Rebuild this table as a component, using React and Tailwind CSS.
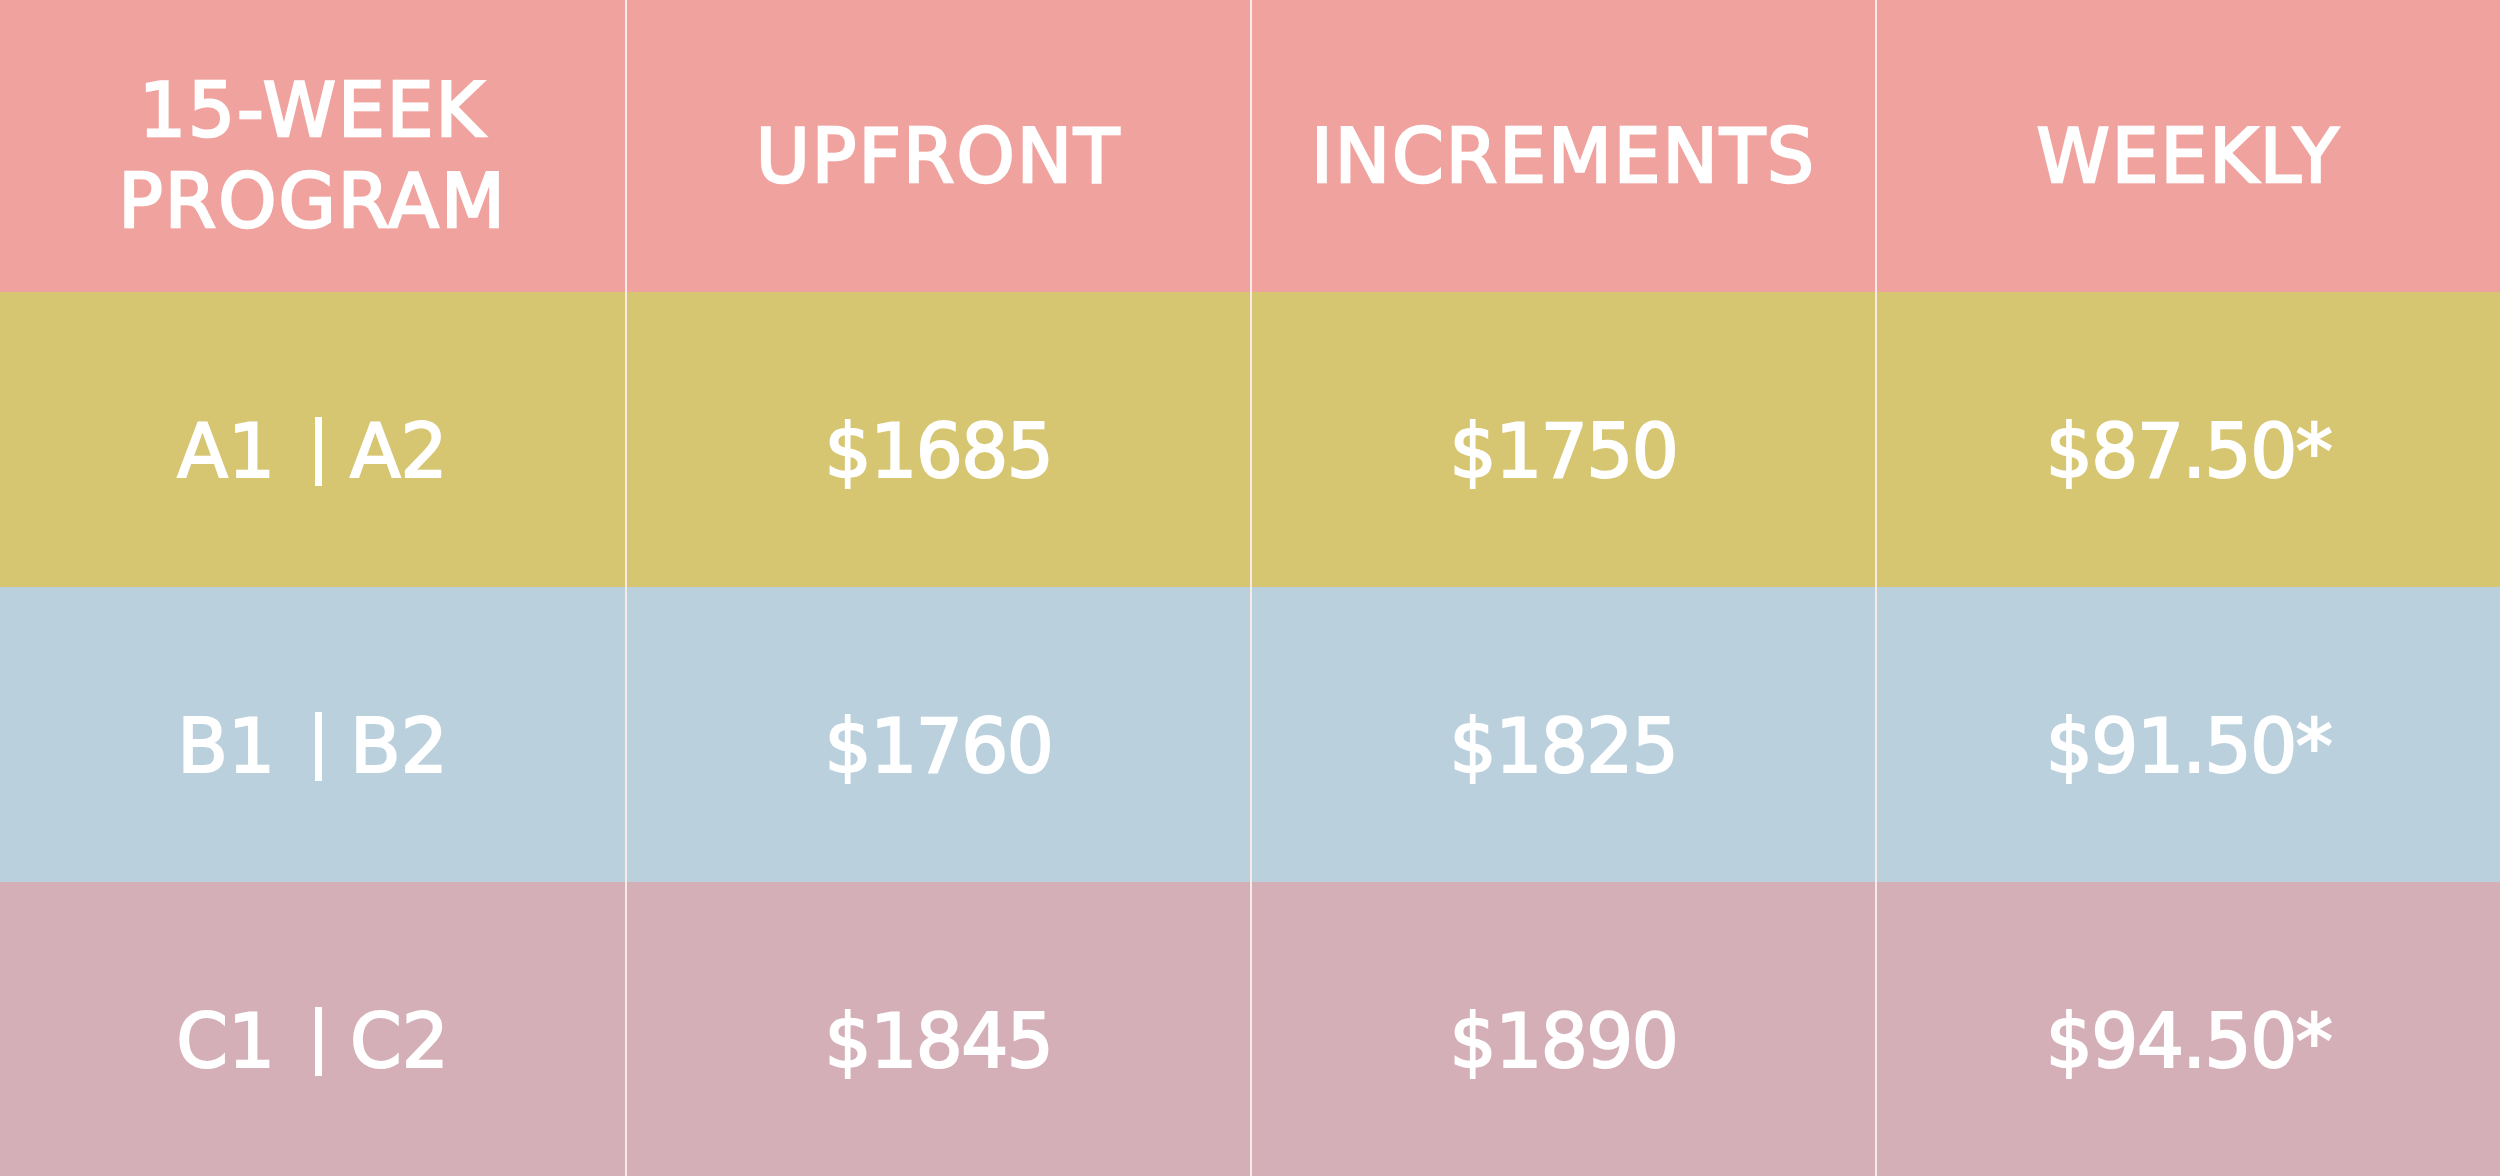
import React from "react";

const rows = [
    { bg: "bg-[#d6c571]", label: ["A1", "A2"], upfront: "$1685", inc: "$1750", weekly: "$87.50*" },
    { bg: "bg-[#bad0dd]", label: ["B1", "B2"], upfront: "$1760", inc: "$1825", weekly: "$91.50*" },
    { bg: "bg-[#d4afb7]", label: ["C1", "C2"], upfront: "$1845", inc: "$1890", weekly: "$94.50*" },
];

const font = { fontFamily: '"DejaVu Sans", sans-serif' };

function Cell({ children, first, className = "" }) {
    return (
        <div
            className={`flex items-center justify-center text-white ${
                first ? "" : "border-l-2 border-[#f6ebe6]"
            } ${className}`}
        >
            {children}
        </div>
    );
}

// the reference face is a bit heavier than DejaVu Book, so thicken with a stroke
const head = "bg-[#f0a29e] text-[74px] tracking-[2px] pt-5 [-webkit-text-stroke:2.5px_white]";
const amount = "text-[74px] tracking-[-1.5px] pt-6 [-webkit-text-stroke:2px_white]";

export default function App() {
    return (
        <div className="w-[2500px] h-[1176px] overflow-hidden" style={font}>
            <div className="grid grid-cols-4 grid-rows-[292px_295px_295px_294px] h-full">
                <Cell first className={`${head} leading-[91px] text-center`}>
                    <div>
                        15-WEEK
                        <br />
                        PROGRAM
                    </div>
                </Cell>
                <Cell className={head}>UPFRONT</Cell>
                <Cell className={head}>INCREMENTS</Cell>
                <Cell className={head}>WEEKLY</Cell>

                {rows.map((r) => (
                    <React.Fragment key={r.label[0]}>
                        <Cell first className={`${r.bg} text-[74px] pt-6 [-webkit-text-stroke:2px_white]`}>
                            <span>{r.label[0]}</span>
                            <span className="inline-block w-[7px] h-[69px] bg-white ml-[40px] mr-[28px]" />
                            <span>{r.label[1]}</span>
                        </Cell>
                        <Cell className={`${r.bg} ${amount}`}>{r.upfront}</Cell>
                        <Cell className={`${r.bg} ${amount}`}>{r.inc}</Cell>
                        <Cell className={`${r.bg} ${amount}`}>{r.weekly}</Cell>
                    </React.Fragment>
                ))}
            </div>
        </div>
    );
}
